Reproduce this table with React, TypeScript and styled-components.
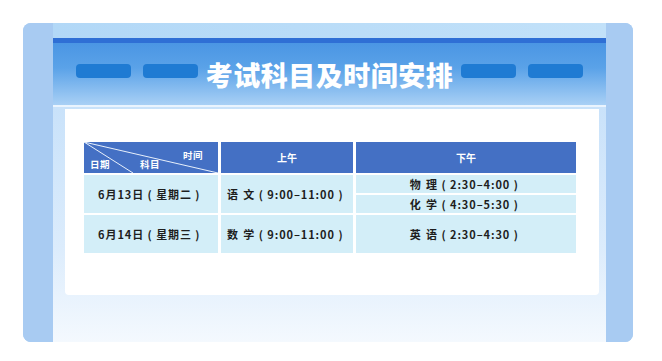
import styled, { createGlobalStyle } from 'styled-components';

const GlobalStyle = createGlobalStyle`
  body {
    margin: 0;
    background: #ffffff;
    font-family: 'Noto Sans CJK SC', 'Noto Sans', sans-serif;
  }
`;

type Entry = { label: string; note: string };
type Day = { date: Entry; morning: Entry; afternoon: Entry[] };

const days: Day[] = [
  {
    date: { label: '6月13日', note: '星期二' },
    morning: { label: '语 文', note: '9:00–11:00' },
    afternoon: [
      { label: '物 理', note: '2:30–4:00' },
      { label: '化 学', note: '4:30–5:30' },
    ],
  },
  {
    date: { label: '6月14日', note: '星期三' },
    morning: { label: '数 学', note: '9:00–11:00' },
    afternoon: [{ label: '英 语', note: '2:30–4:30' }],
  },
];

const Text = ({ entry }: { entry: Entry }) => (
  <>
    {entry.label}
    <Paren>(</Paren>
    {entry.note}
    <Paren>)</Paren>
  </>
);

const App = (): JSX.Element => {
  return (
    <>
      <GlobalStyle />
      <Frame>
        <Side />
        <Main>
          <TopBand />
          <Rule />
          <Banner>
            <Pill />
            <Pill />
            <Title>考试科目及时间安排</Title>
            <Pill />
            <Pill />
          </Banner>
          <Divider />
          <Content>
            <Panel>
              <Schedule>
                <CornerCell>
                  <Diagonals viewBox="0 0 134 31" preserveAspectRatio="none">
                    <line x1="0" y1="0" x2="49" y2="31" stroke="#e8f0fb" strokeWidth="1" />
                    <line x1="0" y1="0" x2="134" y2="31" stroke="#e8f0fb" strokeWidth="1" />
                  </Diagonals>
                  <CornerLabel>日期</CornerLabel>
                  <CornerLabel $offset={30}>科目</CornerLabel>
                  <CornerLabel $top>时间</CornerLabel>
                </CornerCell>
                <HeadCell>上午</HeadCell>
                <HeadCell>下午</HeadCell>
                {days.map((day) => {
                  const span = day.afternoon.length === 1 ? 2 : 1;
                  return [
                    <BodyCell key={day.date.label + 'd'} $span={2}>
                      <Text entry={day.date} />
                    </BodyCell>,
                    <BodyCell key={day.date.label + 'm'} $span={2}>
                      <Text entry={day.morning} />
                    </BodyCell>,
                    ...day.afternoon.map((slot) => (
                      <BodyCell key={day.date.label + slot.label} $span={span}>
                        <Text entry={slot} />
                      </BodyCell>
                    )),
                  ];
                })}
              </Schedule>
            </Panel>
          </Content>
        </Main>
        <Side />
      </Frame>
    </>
  );
};

export default App;

const Frame = styled.div`
  margin: 23px 0 0 23px;
  width: 610px;
  height: 319px;
  display: grid;
  grid-template-columns: 30px 1fr 27px;
  border-radius: 8px;
  overflow: hidden;
  background: #a8cbf2;
`;

const Side = styled.div`
  background: #a8cbf2;
`;

const Main = styled.div`
  display: flex;
  flex-direction: column;
  min-width: 0;
`;

const TopBand = styled.div`
  height: 15px;
  background: linear-gradient(to right, #b2d8f7, #c2e1f9);
`;

const Rule = styled.div`
  height: 5px;
  background: #2f6fd5;
`;

const Banner = styled.div`
  height: 62px;
  display: flex;
  align-items: center;
  justify-content: center;
  background: linear-gradient(to bottom, #4b96e4 0%, #5aa2e8 40%, #a9d0f5 100%);
`;

const Pill = styled.div`
  width: 55px;
  height: 14px;
  border-radius: 4px;
  background: #1f7bd3;
  margin: -7px 6px 0;
`;

const Title = styled.h1`
  margin: 0 2px;
  color: #ffffff;
  font-size: 27px;
  font-weight: 900;
  letter-spacing: 0.5px;
  line-height: 1;
  padding-top: 1px;
`;

const Divider = styled.div`
  height: 2px;
  background: #eaf4fe;
`;

const Content = styled.div`
  flex: 1;
  padding: 2px 7px 0 12px;
  background: linear-gradient(to bottom, #c9e2fa 0%, #dcecfc 60%, #f4f9fe 100%);
`;

const Panel = styled.div`
  height: 186px;
  box-sizing: border-box;
  padding: 33px 0 0 19px;
  background: #ffffff;
  border-radius: 0 0 4px 4px;
`;

const Schedule = styled.div`
  display: grid;
  grid-template-columns: 134px 132px 220px;
  grid-template-rows: 31px 18px 18px 18px 18px;
  column-gap: 3px;
  row-gap: 2px;
  color: #1e1e1e;
`;

const HeadCell = styled.div`
  display: flex;
  align-items: center;
  justify-content: center;
  background: #4470c4;
  color: #ffffff;
  font-size: 10px;
  font-weight: 700;
`;

const CornerCell = styled.div`
  position: relative;
  display: flex;
  align-items: flex-end;
  padding: 0 15px 4px 6px;
  background: #4470c4;
  color: #ffffff;
`;

const Diagonals = styled.svg`
  position: absolute;
  inset: 0;
  width: 100%;
  height: 100%;
`;

const CornerLabel = styled.span<{ $offset?: number; $top?: boolean }>`
  position: relative;
  font-size: 9.5px;
  font-weight: 700;
  letter-spacing: 0.5px;
  line-height: 1;
  margin-left: ${({ $offset, $top }) => ($top ? 'auto' : `${$offset ?? 0}px`)};
  align-self: ${({ $top }) => ($top ? 'flex-start' : 'flex-end')};
  margin-top: ${({ $top }) => ($top ? '9px' : '0')};
`;

const BodyCell = styled.div<{ $span: number }>`
  grid-row: span ${({ $span }) => $span};
  display: flex;
  align-items: center;
  justify-content: center;
  background: #d3eef8;
  font-size: 11px;
  font-weight: 700;
  letter-spacing: 0.9px;
  word-spacing: 1px;
  white-space: pre;
`;

const Paren = styled.span`
  margin: 0 3.5px;
`;
